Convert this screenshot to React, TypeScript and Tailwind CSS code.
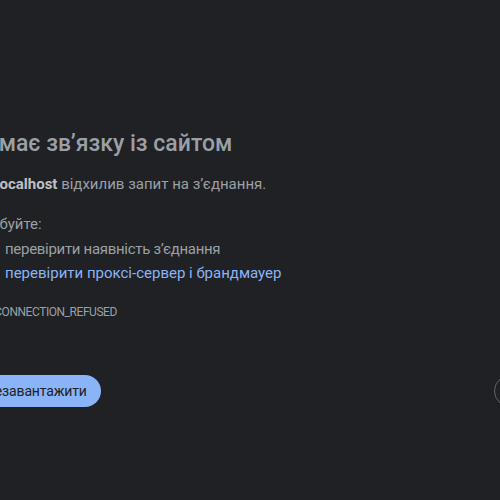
import React from "react";

export default function App() {
  const font = { fontFamily: 'Roboto, "Noto Sans", sans-serif' };
  return (
    <div className="w-[500px] h-[500px] bg-[#202124] overflow-hidden relative" style={font}>
      <div className="pt-[128px] pl-0">
        <h1 className="text-[23px] leading-[32px] text-[#9aa0a6] font-medium whitespace-nowrap -ml-[30px]">
          Немає звʼязку із сайтом
        </h1>
        <p className="mt-[14px] text-[15px] leading-[20px] text-[#9aa0a6] whitespace-nowrap -ml-[42px]">
          Сайт <b className="text-[#bdc1c6] font-bold">localhost</b> відхилив запит на зʼєднання.
        </p>
        <p className="mt-[20px] text-[15px] leading-[20px] text-[#9aa0a6] whitespace-nowrap -ml-[36px]">
          Спробуйте:
        </p>
        <ul className="mt-[3px] text-[15px] leading-[24px] whitespace-nowrap">
          <li className="text-[#9aa0a6] pl-[5px] tracking-[-0.3px]">перевірити наявність зʼєднання</li>
          <li className="text-[#8ab4f8] pl-[5px]">перевірити проксі-сервер і брандмауер</li>
        </ul>
        <div className="mt-[19px] text-[12px] leading-[16px] text-[#9aa0a6] whitespace-nowrap -ml-[31px] tracking-[-0.45px]">
          ERR_CONNECTION_REFUSED
        </div>
        <div className="mt-[55px] flex items-center justify-between">
          <button className="-ml-[46px] h-[32px] rounded-full bg-[#8ab4f8] text-[#202124] text-[14px] tracking-[-0.15px] pl-[16px] pr-[14px] whitespace-nowrap">
            Перезавантажити
          </button>
          <button className="-mr-[80px] h-[32px] w-[86px] rounded-full border border-[#5f6368] bg-transparent"></button>
        </div>
      </div>
    </div>
  );
}
